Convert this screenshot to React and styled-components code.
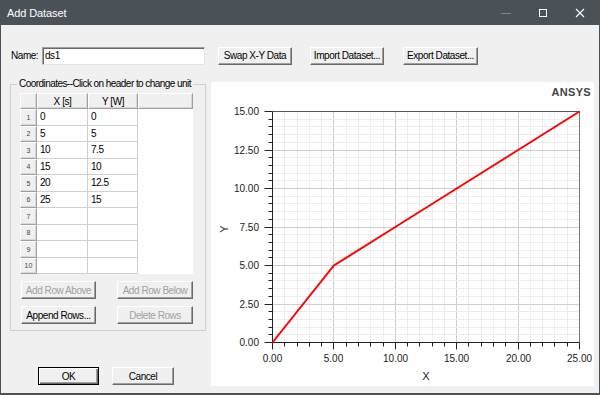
import React from "react";
import styled, { createGlobalStyle } from "styled-components";

const GlobalStyle = createGlobalStyle`
  html, body {
    margin: 0;
    padding: 0;
    background: #f0f0f0;
  }
  body {
    font-family: "Liberation Sans", Arial, sans-serif;
    font-size: 10px;
    letter-spacing: -0.45px;
    color: #000;
  }
  * {
    box-sizing: border-box;
  }
`;

const Window = styled.div`
  width: 600px;
  height: 395px;
  display: flex;
  flex-direction: column;
  background: #f0f0f0;
  border-left: 1px solid #4b5257;
  border-right: 1px solid #4b5257;
  border-bottom: 2px solid #4b5257;
  overflow: hidden;
`;

const TitleBar = styled.div`
  height: 25px;
  flex-shrink: 0;
  display: flex;
  align-items: center;
  background: #4b5257;
  padding-left: 6px;
`;

const Title = styled.div`
  font-size: 11px;
  letter-spacing: -0.1px;
  color: #fff;
`;

const Controls = styled.div`
  display: flex;
  margin-left: auto;
  margin-right: 1px;
`;

const Control = styled.div`
  width: 37px;
  height: 25px;
  display: flex;
  align-items: center;
  justify-content: center;
`;

const Body = styled.div`
  flex: 1;
  padding: 21px 0 0 9px;
  display: flex;
  flex-direction: column;
`;

const TopRow = styled.div`
  display: flex;
  align-items: center;
  height: 19px;
`;

const Label = styled.label`
  width: 32px;
  flex-shrink: 0;
  padding-left: 1px;
`;

const NameInput = styled.input`
  width: 163px;
  height: 18px;
  margin: 0;
  padding: 0 2px;
  font: inherit;
  letter-spacing: inherit;
  color: #000;
  background: #fff;
  border: 1px solid;
  border-color: #a0a0a0 #e3e3e3 #e3e3e3 #a0a0a0;
  box-shadow: inset 1px 1px 0 #696969;
  outline: none;
`;

const Button = styled.button`
  width: ${(p) => p.$w}px;
  height: 18px;
  flex-shrink: 0;
  margin: 0 0 0 ${(p) => p.$ml || 0}px;
  padding: 0;
  font: inherit;
  letter-spacing: inherit;
  color: ${(p) => (p.disabled ? "#a0a0a0" : "#000")};
  background: #f0f0f0;
  border: 1px solid;
  border-color: ${(p) => (p.$default ? "#000" : "#fff #696969 #696969 #fff")};
  box-shadow: ${(p) =>
    p.$default
      ? "inset 1px 1px 0 #fff, inset -1px -1px 0 #696969, inset -2px -2px 0 #a0a0a0"
      : "inset -1px -1px 0 #a0a0a0"};
  white-space: nowrap;
`;

const MainRow = styled.div`
  display: flex;
  margin-top: 13px;
`;

const LeftColumn = styled.div`
  display: flex;
  flex-direction: column;
`;

const GroupBox = styled.fieldset`
  width: 196px;
  margin: 0;
  padding: 3px 0 6px 9px;
  border: 1px solid #d0d0d0;
`;

const Legend = styled.legend`
  padding: 0 2px;
  margin-left: -3px;
  line-height: 12px;
  letter-spacing: -0.55px;
  white-space: nowrap;
`;

const Grid = styled.div`
  display: grid;
  grid-template-columns: 17px 51px 50px 55px;
  grid-template-rows: 16px repeat(10, 16.5px);
  width: 173px;
  background: #fff;
`;

const HeadCell = styled.div`
  background: #f0f0f0;
  border-style: solid;
  border-width: 1px;
  border-color: #fff #a0a0a0 #a0a0a0 #fff;
  box-shadow: inset -1px -1px 0 #d8d8d8;
  display: flex;
  align-items: center;
  justify-content: center;
  font-size: ${(p) => (p.$small ? "7px" : "10px")};
  letter-spacing: ${(p) => (p.$small ? "0" : "-0.45px")};
  color: ${(p) => (p.$small ? "#3a4260" : "#000")};
`;

const Cell = styled.div`
  border-right: 1px solid #d0d0d0;
  border-bottom: 1px solid #d0d0d0;
  padding-left: 3px;
  display: flex;
  align-items: center;
`;

const Spare = styled.div`
  background: #fff;
`;

const ButtonRow = styled.div`
  display: flex;
  margin: 7px 0 0 1px;
  gap: 21px;
`;

const DialogButtons = styled.div`
  display: flex;
  gap: 13px;
  margin: 36px 0 0 28px;
`;

const ChartPanel = styled.div`
  width: 383px;
  height: 304px;
  margin: 4px 0 0 5px;
  background: #fff;
`;

const rows = [
  ["0", "0"],
  ["5", "5"],
  ["10", "7.5"],
  ["15", "10"],
  ["20", "12.5"],
  ["25", "15"],
  ["", ""],
  ["", ""],
  ["", ""],
  ["", ""],
];

const X0 = 61.5;
const X1 = 368.5;
const Y0 = 260.5;
const Y1 = 29.5;
const px = (v) => Math.round(X0 + (v / 25) * (X1 - X0) - 0.5) + 0.5;
const py = (v) => Math.round(Y0 - (v / 15) * (Y0 - Y1) - 0.5) + 0.5;

const range = (n, step) => Array.from({ length: n }, (_, i) => +(i * step).toFixed(2));
const xs = range(26, 1);
const ys = range(31, 0.5);
const points = [
  [0, 0],
  [5, 5],
  [10, 7.5],
  [15, 10],
  [20, 12.5],
  [25, 15],
];

const Chart = () => (
  <svg width="383" height="304" style={{ display: "block" }}>
    {xs.map((v) => (
      <line key={"gx" + v} x1={px(v)} x2={px(v)} y1={Y1} y2={Y0} stroke={v % 5 === 0 ? "#cfcfcf" : "#ececec"} />
    ))}
    {ys.map((v) => (
      <line key={"gy" + v} x1={X0} x2={X1} y1={py(v)} y2={py(v)} stroke={v % 2.5 === 0 ? "#cfcfcf" : "#ececec"} />
    ))}
    <line x1={X0} x2={X1} y1={Y1} y2={Y1} stroke="#555" />
    <line x1={X1} x2={X1} y1={Y1} y2={Y0} stroke="#777" />
    {ys.map((v) => (
      <line key={"ty" + v} x1={X0 - (v % 2.5 === 0 ? 8 : 4)} x2={X0} y1={py(v)} y2={py(v)} stroke="#222" />
    ))}
    {xs.map((v) => (
      <line key={"tx" + v} x1={px(v)} x2={px(v)} y1={Y0} y2={Y0 + (v % 5 === 0 ? 7 : 4)} stroke="#222" />
    ))}
    <line x1={X0} x2={X0} y1={Y1} y2={Y0 + 0.5} stroke="#222" />
    <line x1={X0} x2={X1} y1={Y0} y2={Y0} stroke="#222" />
    <polyline
      points={points.map(([x, y]) => `${X0 + (x / 25) * (X1 - X0)},${Y0 - (y / 15) * (Y0 - Y1)}`).join(" ")}
      fill="none"
      stroke="#ff0000"
      strokeWidth="2"
    />
    <g fontFamily='"Liberation Sans", Arial, sans-serif' fontSize="10" fill="#1a1a1a" letterSpacing="0">
      {[0, 2.5, 5, 7.5, 10, 12.5, 15].map((v) => (
        <text key={"ly" + v} x="48" y={py(v) + 3.5} textAnchor="end">
          {v.toFixed(2)}
        </text>
      ))}
      {[0, 5, 10, 15, 20, 25].map((v) => (
        <text key={"lx" + v} x={px(v)} y="280" textAnchor="middle">
          {v.toFixed(2)}
        </text>
      ))}
      <text x="215" y="298" textAnchor="middle" fontSize="11">X</text>
      <text x="17" y="147" textAnchor="middle" fontSize="11" transform="rotate(-90 17 147)">Y</text>
      <text x="380" y="14" textAnchor="end" fontSize="11" fontWeight="bold" fill="#444" letterSpacing="0.3">
        ANSYS
      </text>
    </g>
  </svg>
);

const App = () => {
  return (
    <Window>
      <GlobalStyle />
      <TitleBar>
        <Title>Add Dataset</Title>
        <Controls>
          <Control>
            <svg width="10" height="10">
              <line x1="0" x2="10" y1="5.5" y2="5.5" stroke="#7f878c" />
            </svg>
          </Control>
          <Control>
            <svg width="10" height="10">
              <rect x="1.5" y="1.5" width="7" height="7" fill="none" stroke="#fff" />
            </svg>
          </Control>
          <Control>
            <svg width="10" height="10">
              <path d="M1 1L9 9M9 1L1 9" stroke="#fff" strokeWidth="1.1" />
            </svg>
          </Control>
        </Controls>
      </TitleBar>
      <Body>
        <TopRow>
          <Label>Name:</Label>
          <NameInput defaultValue="ds1" />
          <Button $w={74} $ml={13}>Swap X-Y Data</Button>
          <Button $w={74} $ml={18}>Import Dataset...</Button>
          <Button $w={75} $ml={19}>Export Dataset...</Button>
        </TopRow>
        <MainRow>
          <LeftColumn>
            <GroupBox>
              <Legend>Coordinates--Click on header to change unit</Legend>
              <Grid>
                <HeadCell />
                <HeadCell>X [s]</HeadCell>
                <HeadCell>Y [W]</HeadCell>
                <HeadCell />
                {rows.map(([x, y], i) => (
                  <React.Fragment key={i}>
                    <HeadCell $small>{i + 1}</HeadCell>
                    <Cell>{x}</Cell>
                    <Cell>{y}</Cell>
                    <Spare />
                  </React.Fragment>
                ))}
              </Grid>
              <ButtonRow>
                <Button $w={75} disabled>Add Row Above</Button>
                <Button $w={76} disabled>Add Row Below</Button>
              </ButtonRow>
              <ButtonRow>
                <Button $w={75}>Append Rows...</Button>
                <Button $w={76} disabled>Delete Rows</Button>
              </ButtonRow>
            </GroupBox>
            <DialogButtons>
              <Button $w={61} $default>OK</Button>
              <Button $w={62}>Cancel</Button>
            </DialogButtons>
          </LeftColumn>
          <ChartPanel>
            <Chart />
          </ChartPanel>
        </MainRow>
      </Body>
    </Window>
  );
};

export default App;
